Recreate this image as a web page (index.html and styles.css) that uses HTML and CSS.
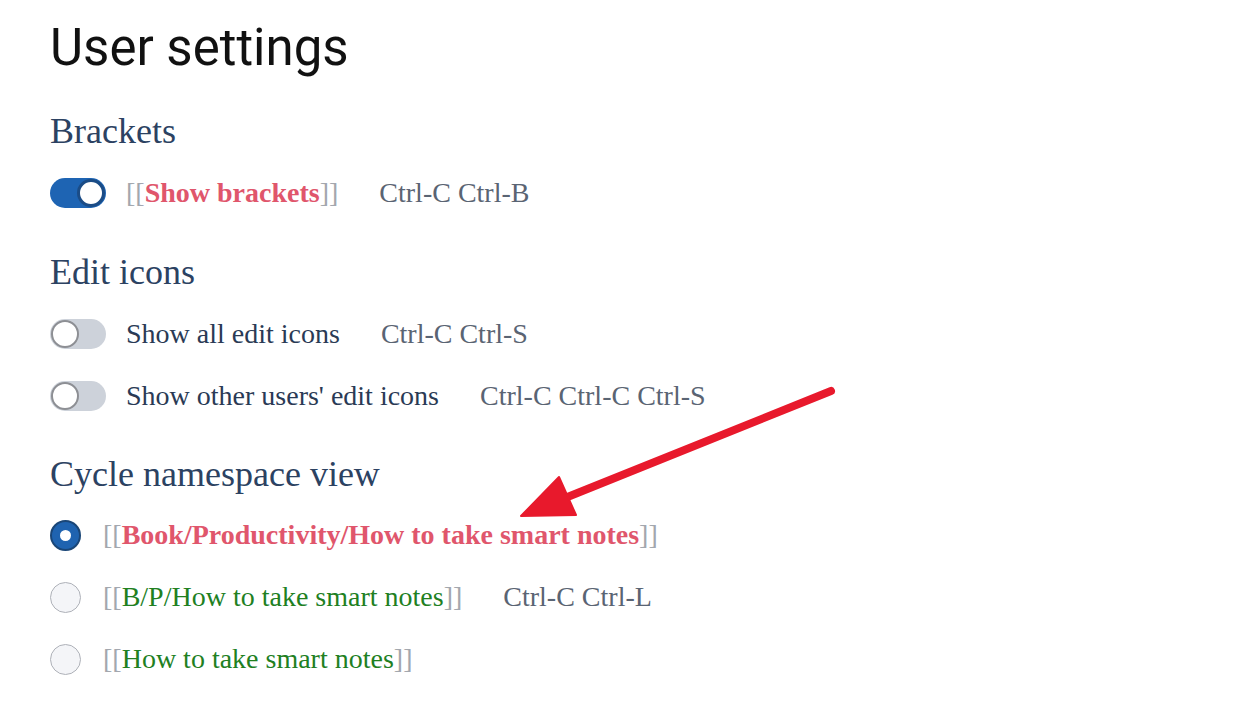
FILE: index.html
```html
<!DOCTYPE html>
<html lang="en">
<head>
<meta charset="utf-8">
<title>User settings</title>
<link rel="stylesheet" href="styles.css">
</head>
<body>
<main class="page">
  <h1 class="title">User settings</h1>

  <section class="group">
    <h2 class="group-title">Brackets</h2>
    <div class="row">
      <span class="toggle on"><span class="knob"></span></span>
      <span class="label"><span class="br">[[</span><b class="link-red">Show brackets</b><span class="br">]]</span></span>
      <span class="keys">Ctrl-C Ctrl-B</span>
    </div>
  </section>

  <section class="group">
    <h2 class="group-title">Edit icons</h2>
    <div class="row">
      <span class="toggle"><span class="knob"></span></span>
      <span class="label">Show all edit icons</span>
      <span class="keys">Ctrl-C Ctrl-S</span>
    </div>
    <div class="row">
      <span class="toggle"><span class="knob"></span></span>
      <span class="label">Show other users' edit icons</span>
      <span class="keys">Ctrl-C Ctrl-C Ctrl-S</span>
    </div>
  </section>

  <section class="group radios">
    <h2 class="group-title">Cycle namespace view</h2>
    <div class="row">
      <span class="radio checked"></span>
      <span class="label"><span class="br">[[</span><b class="link-red">Book/Productivity/How to take smart notes</b><span class="br">]]</span></span>
    </div>
    <div class="row">
      <span class="radio"></span>
      <span class="label"><span class="br">[[</span><span class="link-green">B/P/How to take smart notes</span><span class="br">]]</span></span>
      <span class="keys">Ctrl-C Ctrl-L</span>
    </div>
    <div class="row">
      <span class="radio"></span>
      <span class="label"><span class="br">[[</span><span class="link-green">How to take smart notes</span><span class="br">]]</span></span>
    </div>
  </section>

  <svg class="arrow" width="1244" height="704" viewBox="0 0 1244 704" aria-hidden="true">
    <line x1="831" y1="391" x2="560" y2="500" stroke="#e8192c" stroke-width="8" stroke-linecap="round"/>
    <polygon points="521,516 559,477 576,515" fill="#e8192c" stroke="#e8192c" stroke-width="2" stroke-linejoin="round"/>
  </svg>
</main>
</body>
</html>
```

FILE: styles.css
```css
html, body {
  margin: 0;
  padding: 0;
  background: #ffffff;
}

.page {
  position: relative;
  padding: 18px 0 0 50px;
  width: 1194px;
  height: 686px;
  overflow: hidden;
  font-family: "Liberation Serif", "Times New Roman", serif;
}

.title {
  margin: 0 0 31px 0;
  font-family: Roboto, "Liberation Sans", sans-serif;
  font-weight: 400;
  font-size: 51px;
  line-height: 60px;
  color: #111111;
}

.group {
  margin-top: 26px;
}

.group:first-of-type {
  margin-top: 0;
}

.group-title {
  margin: 0 0 9px 0;
  font-weight: 400;
  font-size: 36px;
  line-height: 44px;
  color: #2c4262;
}

.radios {
  margin-top: 25px;
}

.radios .group-title {
  margin-bottom: 8px;
}

.row {
  display: flex;
  align-items: center;
  height: 62px;
  font-size: 28px;
  color: #2a3a55;
}

.toggle {
  position: relative;
  flex: none;
  width: 56px;
  height: 30px;
  border-radius: 15px;
  background: #cdd2da;
  margin-right: 20px;
}

.toggle .knob {
  position: absolute;
  top: 1px;
  left: 1px;
  width: 24px;
  height: 24px;
  border-radius: 50%;
  background: #ffffff;
  border: 2px solid #8d8f94;
}

.toggle.on {
  background: #1e64b3;
}

.toggle.on .knob {
  left: auto;
  right: 1px;
  border: 3px solid #1b4c86;
  width: 22px;
  height: 22px;
}

.radio {
  flex: none;
  box-sizing: border-box;
  width: 31px;
  height: 31px;
  border-radius: 50%;
  background: #f4f5f8;
  border: 1.5px solid #aeb1b8;
  margin-right: 22px;
}

.radio.checked {
  background: #1f63b0;
  border: 2px solid #1a4677;
  display: flex;
  align-items: center;
  justify-content: center;
}

.radio.checked::after {
  content: "";
  width: 11px;
  height: 11px;
  border-radius: 50%;
  background: #ffffff;
}

.label {
  white-space: nowrap;
}

.br {
  color: #a3a7ae;
}

.link-red {
  color: #e0566c;
  font-weight: 700;
}

.link-green {
  color: #21801f;
}

.keys {
  margin-left: 41px;
  color: #5a6473;
  white-space: nowrap;
}

.arrow {
  position: absolute;
  left: 0;
  top: 0;
  pointer-events: none;
}
```
